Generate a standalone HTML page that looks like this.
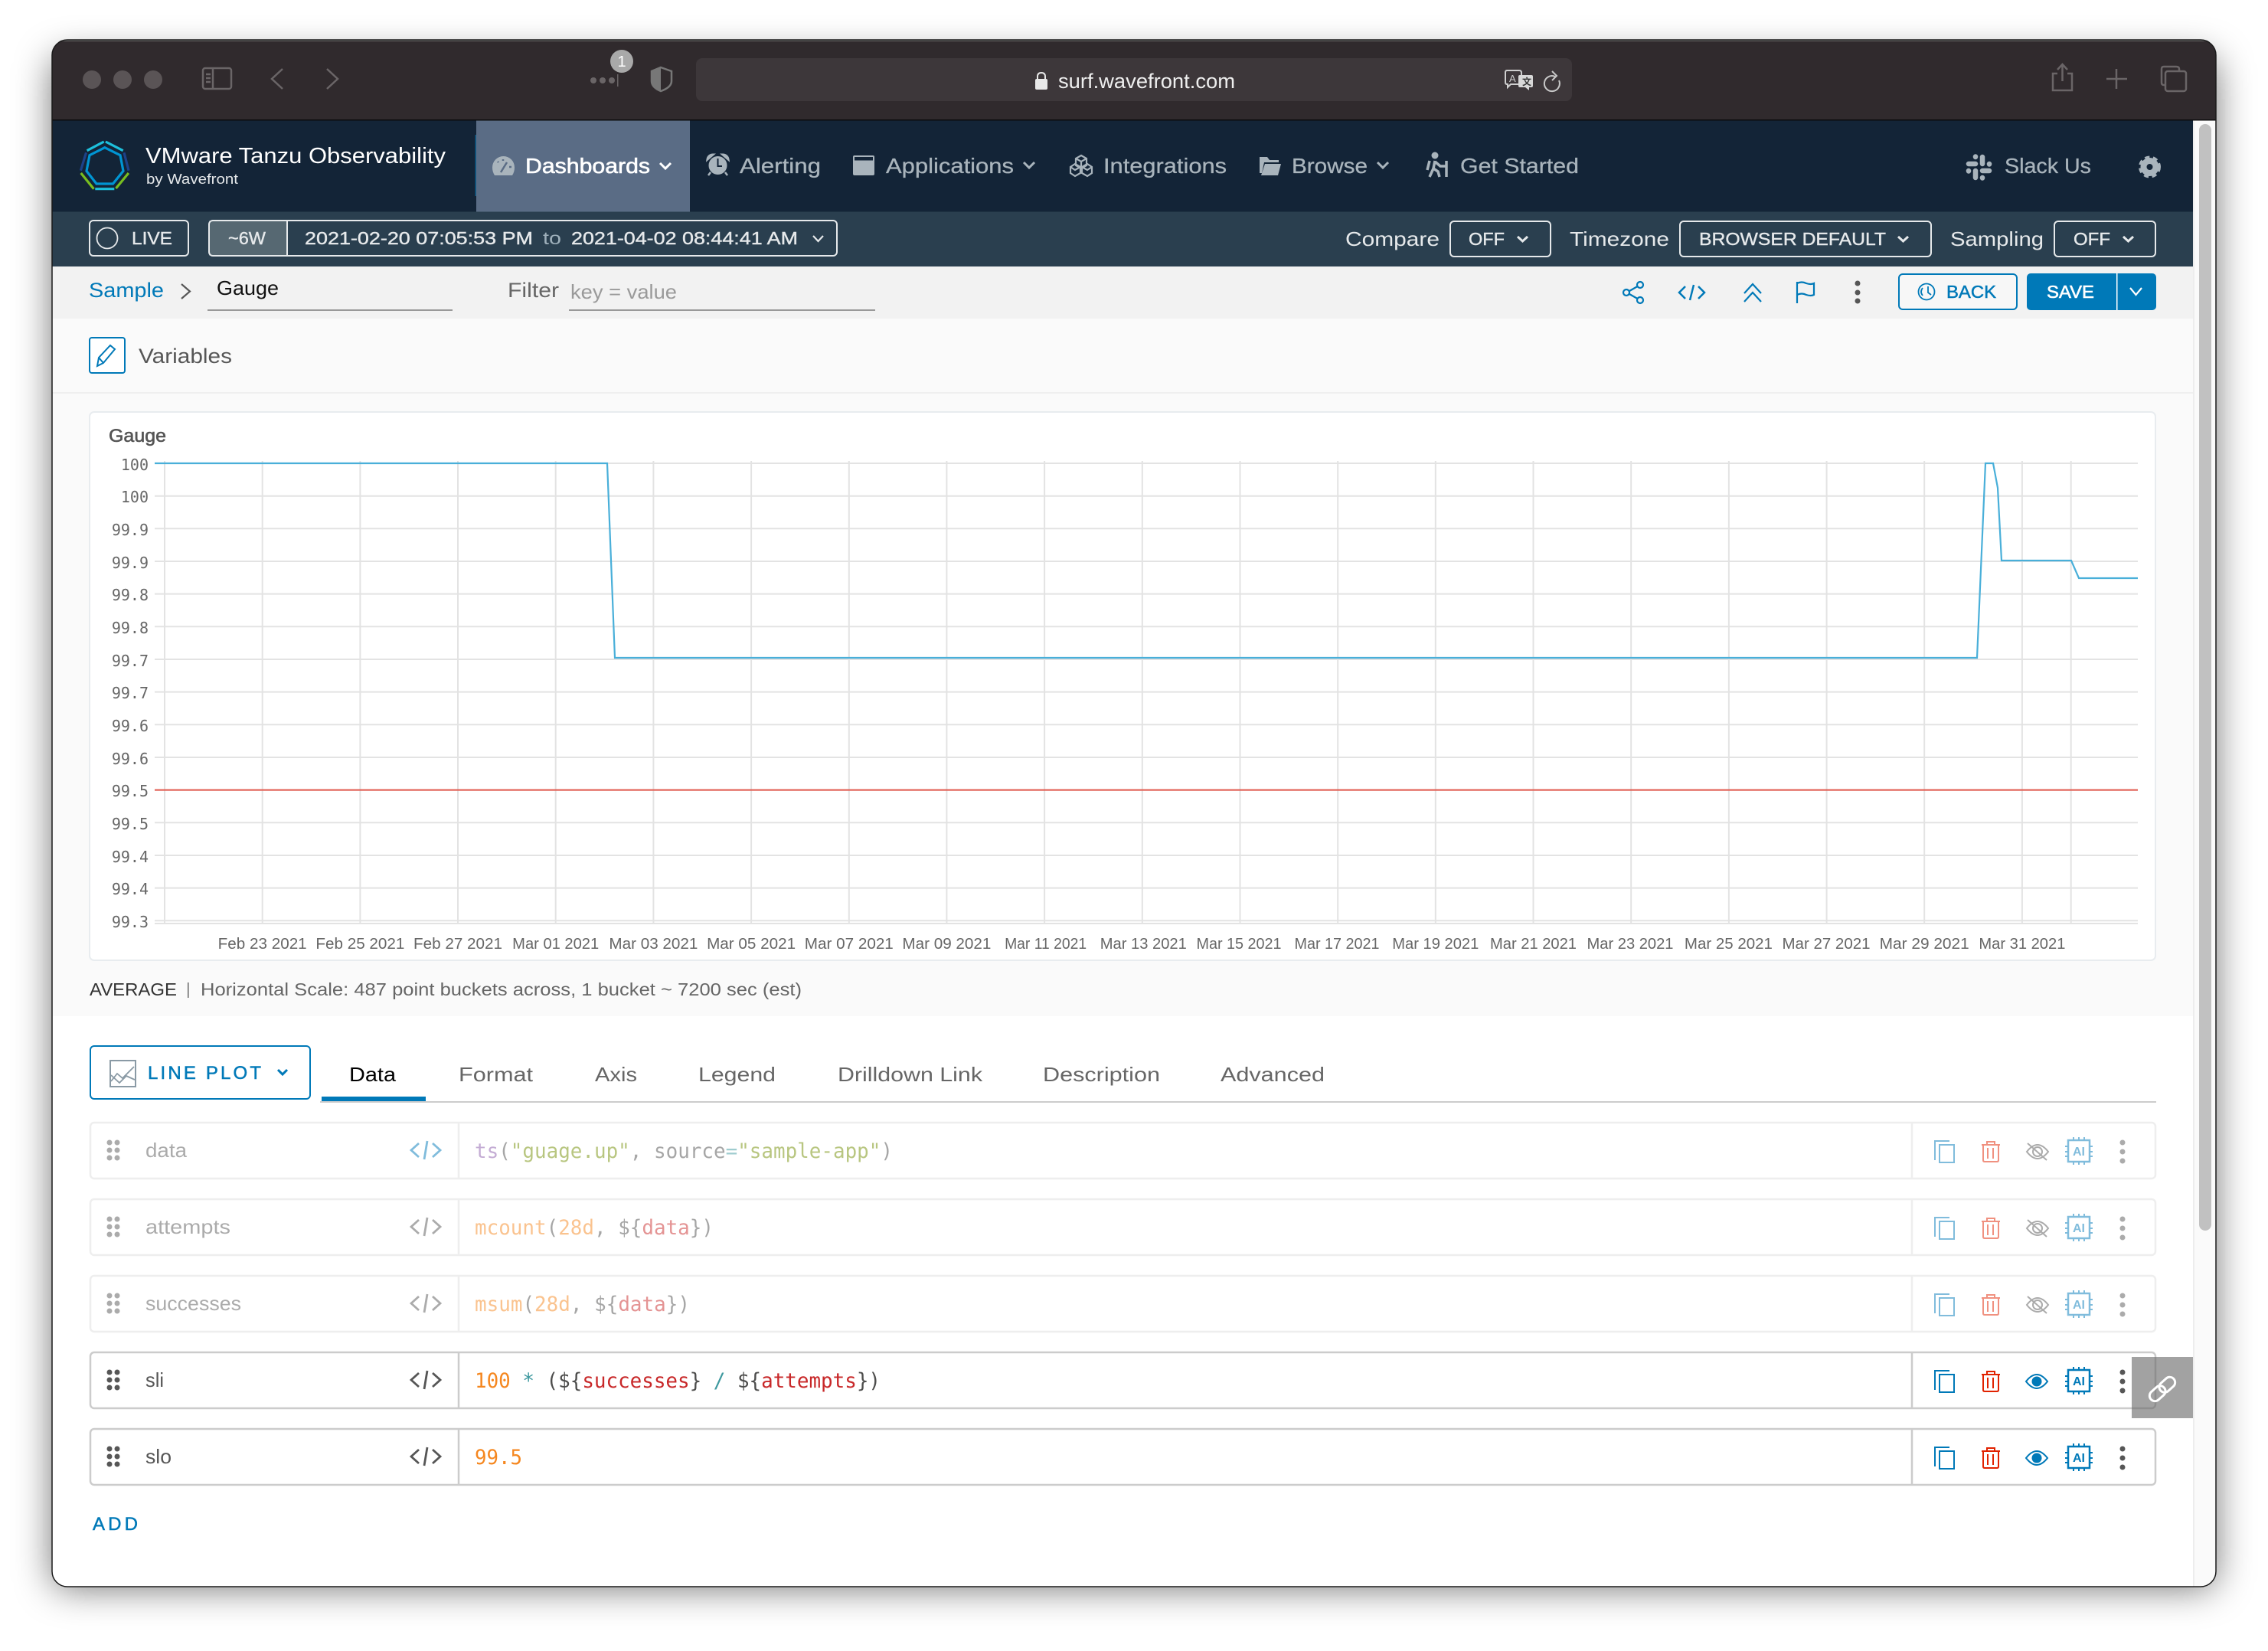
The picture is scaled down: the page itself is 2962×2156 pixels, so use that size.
<!DOCTYPE html>
<html lang="en">
<head>
<meta charset="utf-8">
<title>VMware Tanzu Observability - Gauge</title>
<style>
html,body{margin:0;padding:0;background:#fff;width:2962px;height:2156px;overflow:hidden}
svg{display:block}
text{font-family:"Liberation Sans",sans-serif;white-space:pre}
.m{font-family:"DejaVu Sans Mono","Liberation Mono",monospace}
.nav{font-size:28px;fill:#a9b4bc;stroke:#a9b4bc;stroke-width:.3px}
.bar{font-size:26px;fill:#e6e9eb}
.cap{font-size:23px;fill:#e6e9eb;stroke:#e6e9eb;stroke-width:.4px}
.xl{font-size:20px;fill:#666;text-anchor:middle}
.yl{font-size:20px;fill:#666;text-anchor:end}
.tab{font-size:26px;fill:#666}
.nm{font-size:26px;fill:#565656}
.code{font-size:27px;fill:#4d4d4c}
.wb{fill:none;stroke:#e6e9eb;stroke-width:2}
.ch{fill:none;stroke-width:3}
.grid line{stroke:#e3e3e3;stroke-width:2}
.tb{fill:none;stroke:#6a6567;stroke-width:2.5}
</style>
</head>
<body>
<svg xmlns="http://www.w3.org/2000/svg" width="2962" height="2156" viewBox="0 0 2962 2156">
<defs>
<filter id="sh" x="-10%" y="-10%" width="120%" height="120%"><feGaussianBlur stdDeviation="24"/></filter>
<clipPath id="win"><rect x="68" y="52" width="2826" height="2020" rx="20"/></clipPath>

<g id="rowicons">
  <path d="M2527 1815V1790H2546" fill="none" stroke="#0079b8" stroke-width="2"/>
  <rect x="2533" y="1795" width="19" height="23" fill="none" stroke="#0079b8" stroke-width="2"/>
  <path d="M2588 1795H2612M2595 1795V1791H2605V1795M2590 1795V1815Q2590 1817 2592 1817H2608Q2610 1817 2610 1815V1795M2596 1799V1813M2603 1799V1813" fill="none" stroke="#e12200" stroke-width="2"/>
  <g fill="none" stroke="#0079b8" stroke-width="2.5">
    <rect x="2701" y="1789" width="28" height="28" stroke-width="2.5"/>
    <path d="M2708 1785V1789M2715 1785V1789M2722 1785V1789M2708 1817V1821M2715 1817V1821M2722 1817V1821M2697 1797H2701M2697 1804H2701M2697 1810H2701M2729 1797H2733M2729 1804H2733M2729 1810H2733" stroke-width="2"/>
  </g>
  <circle cx="2772" cy="1792" r="3.5" fill="#565656"/><circle cx="2772" cy="1804" r="3.5" fill="#565656"/><circle cx="2772" cy="1816" r="3.5" fill="#565656"/>
</g>
<g id="eye">
  <path d="M2646 1804Q2660 1786 2674 1804Q2660 1822 2646 1804Z" fill="none" stroke="#0079b8" stroke-width="2"/>
  <circle cx="2660" cy="1804" r="6.5" fill="#0079b8"/>
</g>
<g id="eyeoff">
  <path d="M2647 1804Q2661 1786 2675 1804Q2661 1822 2647 1804Z" fill="none" stroke="#565656" stroke-width="2"/>
  <circle cx="2661" cy="1804" r="6" fill="none" stroke="#565656" stroke-width="2"/>
  <path d="M2648 1793L2673 1815" stroke="#565656" stroke-width="2" fill="none"/>
</g>
<g id="grip" fill="#565656">
  <circle cx="143" cy="1792" r="3.5"/><circle cx="153" cy="1792" r="3.5"/>
  <circle cx="143" cy="1802" r="3.5"/><circle cx="153" cy="1802" r="3.5"/>
  <circle cx="143" cy="1812" r="3.5"/><circle cx="153" cy="1812" r="3.5"/>
</g>
<path id="codeic" d="M547 1793L537 1802L547 1811M565 1793L575 1802L565 1811M558 1790L554 1814" fill="none" stroke-width="2.8"/>
</defs>

<rect width="2962" height="2156" fill="#fff"/>
<rect x="68" y="74" width="2826" height="2000" rx="20" fill="#000" fill-opacity=".55" filter="url(#sh)"/>

<g clip-path="url(#win)">
  <rect x="68" y="52" width="2826" height="2020" fill="#fff"/>
  <!-- browser toolbar -->
  <rect x="68" y="52" width="2826" height="104" fill="#302a2d"/>
  <rect x="68" y="52" width="2826" height="2" fill="#666"/>
  <rect x="68" y="156" width="2826" height="1.5" fill="#0c0c0c"/>
  <circle cx="120" cy="104" r="12" fill="#5a5456"/><circle cx="160" cy="104" r="12" fill="#5a5456"/><circle cx="200" cy="104" r="12" fill="#5a5456"/>
  <rect x="265" y="89" width="37" height="27" rx="3" class="tb"/>
  <path d="M278 89V116M269 97H275M269 102H275M269 107H275" class="tb" stroke-width="2"/>
  <path d="M369 90L355 103L369 116M427 90L441 103L427 116" class="tb"/>
  <circle cx="775" cy="105" r="4" fill="#6a6567"/><circle cx="787" cy="105" r="4" fill="#6a6567"/><circle cx="799" cy="105" r="4" fill="#6a6567"/>
  <rect x="806" y="97" width="1.5" height="16" fill="#6a6567"/>
  <circle cx="812" cy="80" r="15" fill="#a9a9a9"/>
  <text x="812" y="87" font-size="20" fill="#fff" text-anchor="middle">1</text>
  <path d="M863 88L877 93V106Q877 114 863 119Q851 114 851 106V93Z" fill="none" stroke="#777" stroke-width="2.5"/>
  <path d="M863 88L851 93V106Q851 114 863 119Z" fill="#777"/>
  <rect x="909" y="76" width="1144" height="56" rx="8" fill="#3d373a"/>
  <path d="M1355 104V100Q1355 95 1360 95Q1365 95 1365 100V104" fill="none" stroke="#e8e8e8" stroke-width="2"/>
  <rect x="1352" y="103" width="16" height="14" rx="2" fill="#e8e8e8"/>
  <text x="1382" y="115" font-size="27" fill="#eee" textLength="231" lengthAdjust="spacingAndGlyphs">surf.wavefront.com</text>
  <path d="M1968 92H1984Q1987 92 1987 95V107Q1987 110 1984 110H1973L1969 114V110H1968Q1966 110 1966 107V95Q1966 92 1968 92Z" fill="none" stroke="#cfcfcf" stroke-width="2"/>
  <path d="M1985 98H2000Q2002 98 2002 100V112Q2002 114 2000 114H1997V118L1992 114H1985Q1983 114 1983 112V100Q1983 98 1985 98Z" fill="#d8d8d8"/>
  <text x="1971" y="107" font-size="13" fill="#cfcfcf">A</text>
  <text x="1988" y="111" font-size="12" font-weight="bold" fill="#333" style="font-family:'Liberation Sans','Noto Sans CJK SC',sans-serif">文</text>
  <path d="M2031 100A10 10 0 1 0 2036 105" fill="none" stroke="#c8c8c8" stroke-width="2"/>
  <path d="M2027 93L2033 99L2027 105" fill="none" stroke="#c8c8c8" stroke-width="2"/>
  <path d="M2687 96H2681V118H2706V96H2700M2693.5 106V84M2687 91L2693.5 84L2700 91" class="tb"/>
  <path d="M2764 90V116M2751 103H2778" class="tb"/>
  <rect x="2828" y="93" width="27" height="26" rx="3" class="tb"/>
  <path d="M2828 111H2826Q2823 111 2823 108V90Q2823 87 2826 87H2842Q2846 87 2846 90V93" class="tb"/>

  <!-- nav bar -->
  <rect x="68" y="157.5" width="2796" height="119" fill="#132437"/>
  <rect x="622" y="157.5" width="279" height="119" fill="#5a6c85"/>
  <rect x="620.5" y="176" width="1.5" height="80" fill="#0f5d8a"/>
  <g fill="none" stroke-width="3.2">
    <path d="M136.8 192.7L157 202.7L161 223.3L147.5 240H126L113 223.3L117 202.7Z" stroke="#0095d3"/>
    <path d="M113.6 196.7L135.7 185M137.9 185L160.7 196.7M124.3 246.7H149.3" stroke="#1dc0dc"/>
    <path d="M112.5 199.3L105.4 222.7M162 199.3L168 222.7" stroke="#1d428a"/>
    <path d="M105.7 226L122.5 246.7M167.9 226L151.4 246" stroke="#78be20"/>
  </g>
  <text x="190" y="213" font-size="29" fill="#fff" textLength="392" lengthAdjust="spacingAndGlyphs">VMware Tanzu Observability</text>
  <text x="191" y="240" font-size="18" fill="#e6e9eb" textLength="120" lengthAdjust="spacingAndGlyphs">by Wavefront</text>

  <path d="M643 218.5a14.5 14.5 0 0 1 29 0q0 6-3 10.5h-23q-3-4.5-3-10.5z" fill="#a9b4bc"/>
  <path d="M654 225L662 212M650 211L651 212M657 208V210M665 218H668" stroke="#5a6c85" stroke-width="2.5" fill="none"/>
  <text x="686" y="226" font-size="28" fill="#fff" stroke="#fff" stroke-width=".6" textLength="163" lengthAdjust="spacingAndGlyphs">Dashboards</text>
  <path d="M862 213L869 220L876 213" class="ch" stroke="#fff"/>

  <circle cx="937.5" cy="216" r="12" fill="#a9b4bc"/>
  <path d="M924 208A7 7 0 0 1 931 202L924 208ZM951 208A7 7 0 0 0 944 202L951 208Z" fill="#a9b4bc" stroke="#a9b4bc" stroke-width="3"/>
  <path d="M937.5 207V217H943" stroke="#132437" stroke-width="2" fill="none"/>
  <path d="M928 225L925 229M947 225L950 229" stroke="#a9b4bc" stroke-width="2.5"/>
  <text x="966" y="226" class="nav" textLength="106" lengthAdjust="spacingAndGlyphs">Alerting</text>

  <rect x="1114" y="203" width="28" height="26" rx="2" fill="#a9b4bc"/>
  <rect x="1116" y="205" width="24" height="4.5" fill="#132437"/>
  <text x="1157" y="226" class="nav" textLength="167" lengthAdjust="spacingAndGlyphs">Applications</text>
  <path d="M1337 212L1344 219L1351 212" class="ch" stroke="#a9b4bc"/>

  <g fill="none" stroke="#a9b4bc" stroke-width="2.2">
    <path d="M1412 203L1419 207V216L1412 220L1405 216V207ZM1405 207L1412 211L1419 207M1412 211V220"/>
    <path d="M1404 214L1411 218V226L1404 230L1398 226V218ZM1398 218L1404 222L1411 218"/>
    <path d="M1420 214L1426 218V226L1420 230L1413 226V218ZM1413 218L1420 222L1426 218"/>
  </g>
  <text x="1441" y="226" class="nav" textLength="161" lengthAdjust="spacingAndGlyphs">Integrations</text>

  <path d="M1645 205H1655L1658 209H1670V212H1651L1648 226H1645Z" fill="#a9b4bc"/>
  <path d="M1652 214H1673L1669 229H1647Z" fill="#a9b4bc"/>
  <text x="1687" y="226" class="nav" textLength="99" lengthAdjust="spacingAndGlyphs">Browse</text>
  <path d="M1799 212L1806 219L1813 212" class="ch" stroke="#a9b4bc"/>

  <circle cx="1874" cy="203" r="4.5" fill="#a9b4bc"/>
  <path d="M1874 210L1872 220L1878 224L1880 231M1872 220L1867 231M1874 211L1881 217H1889M1889 210V231M1867 210L1864 222" fill="none" stroke="#a9b4bc" stroke-width="3.5"/>
  <text x="1907" y="226" class="nav" textLength="155" lengthAdjust="spacingAndGlyphs">Get Started</text>

  <g fill="none" stroke="#a9b4bc" stroke-width="6.5" stroke-linecap="round">
    <path d="M2571 214H2580M2589 205V214M2589 223H2598M2580 223V232"/>
    <path d="M2580 204.5V205M2598 214V214.5M2589 232V232.5M2571 223V223.5"/>
  </g>
  <text x="2618" y="226" class="nav" textLength="113" lengthAdjust="spacingAndGlyphs">Slack Us</text>
  <circle cx="2807.5" cy="218" r="8" fill="none" stroke="#a9b4bc" stroke-width="8"/>
  <circle cx="2807.5" cy="218" r="12.5" fill="none" stroke="#a9b4bc" stroke-width="4" stroke-dasharray="6 4.47"/>

  <!-- time bar -->
  <rect x="68" y="276.5" width="2796" height="71.5" fill="#2a3f4f"/>
  <rect x="117" y="288" width="129" height="46" rx="5" class="wb"/>
  <circle cx="140" cy="311" r="13.5" fill="none" stroke="#e6e9eb" stroke-width="1.8"/>
  <text x="172" y="319" class="cap" textLength="53" lengthAdjust="spacingAndGlyphs">LIVE</text>
  <rect x="273" y="288" width="101" height="46" fill="#566872"/>
  <rect x="273" y="288" width="820" height="46" rx="5" class="wb"/>
  <rect x="374" y="288" width="2" height="46" fill="#e6e9eb"/>
  <text x="298" y="319" class="cap" textLength="49" lengthAdjust="spacingAndGlyphs">~6W</text>
  <text x="398" y="319" class="cap" textLength="298" lengthAdjust="spacingAndGlyphs">2021-02-20 07:05:53 PM</text>
  <text x="709" y="319" font-size="23" fill="#9fb0bb" textLength="24" lengthAdjust="spacingAndGlyphs">to</text>
  <text x="746" y="319" class="cap" textLength="296" lengthAdjust="spacingAndGlyphs">2021-04-02 08:44:41 AM</text>
  <path d="M1062 308L1068.5 315L1075 308" fill="none" stroke="#e6e9eb" stroke-width="2.2"/>

  <text x="1757" y="321" class="bar" textLength="123" lengthAdjust="spacingAndGlyphs">Compare</text>
  <rect x="1894" y="289" width="131" height="46" rx="5" class="wb"/>
  <text x="1918" y="320" class="cap" textLength="47" lengthAdjust="spacingAndGlyphs">OFF</text>
  <path d="M1982 309L1988.5 315L1995 309" class="ch" stroke="#e6e9eb"/>
  <text x="2050" y="321" class="bar" textLength="130" lengthAdjust="spacingAndGlyphs">Timezone</text>
  <rect x="2194" y="289" width="328" height="46" rx="5" class="wb"/>
  <text x="2219" y="320" class="cap" textLength="244" lengthAdjust="spacingAndGlyphs">BROWSER DEFAULT</text>
  <path d="M2479 309L2485.5 315L2492 309" class="ch" stroke="#e6e9eb"/>
  <text x="2547" y="321" class="bar" textLength="122" lengthAdjust="spacingAndGlyphs">Sampling</text>
  <rect x="2683" y="289" width="132" height="46" rx="5" class="wb"/>
  <text x="2708" y="320" class="cap" textLength="48" lengthAdjust="spacingAndGlyphs">OFF</text>
  <path d="M2773 309L2779.5 315L2786 309" class="ch" stroke="#e6e9eb"/>

  <!-- breadcrumb bar -->
  <rect x="68" y="348" width="2796" height="68" fill="#f2f2f2"/>
  <rect x="68" y="416" width="2796" height="911" fill="#fafafa"/>
  <rect x="68" y="512" width="2796" height="2" fill="#efefef"/>
  <text x="116" y="388" font-size="27" fill="#0079b8" textLength="98" lengthAdjust="spacingAndGlyphs">Sample</text>
  <path d="M237 371L248 380.500L237 390" fill="none" stroke="#565656" stroke-width="2.2"/>
  <text x="283" y="385" font-size="26" fill="#111" textLength="81" lengthAdjust="spacingAndGlyphs">Gauge</text>
  <rect x="271" y="404" width="320" height="2" fill="#999"/>
  <text x="663" y="388" font-size="27" fill="#666" textLength="67" lengthAdjust="spacingAndGlyphs">Filter</text>
  <text x="745" y="390" font-size="26" fill="#9a9a9a" textLength="139" lengthAdjust="spacingAndGlyphs">key = value</text>
  <rect x="743" y="404" width="400" height="2" fill="#999"/>

  <g fill="none" stroke="#0079b8" stroke-width="2.2">
    <circle cx="2124" cy="382" r="4"/><circle cx="2142" cy="372" r="4"/><circle cx="2142" cy="392" r="4"/>
    <path d="M2128 380L2138.5 374M2128 384L2138.5 390"/>
    <path d="M2201 374L2193 382L2201 390M2218 374L2226 382L2218 390M2212 372L2207 392" stroke-width="2.5"/>
    <path d="M2278 383L2289 371L2300 383M2278 394L2289 382L2300 394"/>
    <path d="M2347 368V396M2347 370Q2353 367 2359 370Q2365 372 2369 370V385Q2365 387 2359 385Q2353 382 2347 385"/>
  </g>
  <circle cx="2426" cy="370" r="3.5" fill="#565656"/><circle cx="2426" cy="382" r="3.5" fill="#565656"/><circle cx="2426" cy="393" r="3.5" fill="#565656"/>
  <rect x="2480" y="358" width="154" height="46" rx="5" fill="#f7f7f7" stroke="#0079b8" stroke-width="2"/>
  <circle cx="2516" cy="381" r="10.5" fill="none" stroke="#0079b8" stroke-width="1.8"/>
  <path d="M2518 374V382L2522 385M2511 376Q2507 381 2511 386" fill="none" stroke="#0079b8" stroke-width="1.8"/>
  <text x="2542" y="389" font-size="23" fill="#0079b8" stroke="#0079b8" stroke-width=".5" textLength="65" lengthAdjust="spacingAndGlyphs">BACK</text>
  <rect x="2647" y="357" width="169" height="48" rx="5" fill="#0079b8"/>
  <rect x="2764" y="357" width="1.5" height="48" fill="#fff"/>
  <text x="2673" y="389" font-size="23" fill="#fff" stroke="#fff" stroke-width=".6" textLength="62" lengthAdjust="spacingAndGlyphs">SAVE</text>
  <path d="M2782 376L2789.5 385L2797 376" fill="none" stroke="#fff" stroke-width="2.2"/>

  <!-- variables -->
  <rect x="117" y="441" width="46" height="46" rx="3" fill="#fff" stroke="#0079b8" stroke-width="2"/>
  <path d="M127 478L129 467L144 451L150 456L135 474ZM129 467L135 474" fill="none" stroke="#0079b8" stroke-width="2"/>
  <text x="181" y="474" font-size="27" fill="#565656" textLength="122" lengthAdjust="spacingAndGlyphs">Variables</text>

  <!-- chart card -->
  <rect x="117" y="538" width="2698" height="716" rx="6" fill="#fff" stroke="#e8ecef" stroke-width="2"/>
  <text x="142" y="577" font-size="24" fill="#555" stroke="#555" stroke-width=".6" textLength="75" lengthAdjust="spacingAndGlyphs">Gauge</text>
  <g class="grid">
    <line x1="202" x2="2792" y1="605" y2="605"/><line x1="202" x2="2792" y1="647.7" y2="647.7"/>
    <line x1="202" x2="2792" y1="690.3" y2="690.3"/><line x1="202" x2="2792" y1="733" y2="733"/>
    <line x1="202" x2="2792" y1="775.6" y2="775.6"/><line x1="202" x2="2792" y1="818.3" y2="818.3"/>
    <line x1="202" x2="2792" y1="861" y2="861"/><line x1="202" x2="2792" y1="903.6" y2="903.6"/>
    <line x1="202" x2="2792" y1="946.3" y2="946.3"/><line x1="202" x2="2792" y1="989" y2="989"/>
    <line x1="202" x2="2792" y1="1031.6" y2="1031.6"/><line x1="202" x2="2792" y1="1074.3" y2="1074.3"/>
    <line x1="202" x2="2792" y1="1117" y2="1117"/><line x1="202" x2="2792" y1="1159.6" y2="1159.6"/>
    <line x1="202" x2="2792" y1="1202.3" y2="1202.3"/><line x1="202" x2="2792" y1="1206" y2="1206"/>
    <line x1="215" x2="215" y1="602" y2="1206"/><line x1="342.7" x2="342.7" y1="602" y2="1206"/>
    <line x1="470.4" x2="470.4" y1="602" y2="1206"/><line x1="598" x2="598" y1="602" y2="1206"/>
    <line x1="725.7" x2="725.7" y1="602" y2="1206"/><line x1="853.4" x2="853.4" y1="602" y2="1206"/>
    <line x1="981.1" x2="981.1" y1="602" y2="1206"/><line x1="1108.8" x2="1108.8" y1="602" y2="1206"/>
    <line x1="1236.4" x2="1236.4" y1="602" y2="1206"/><line x1="1364.1" x2="1364.1" y1="602" y2="1206"/>
    <line x1="1491.8" x2="1491.8" y1="602" y2="1206"/><line x1="1619.5" x2="1619.5" y1="602" y2="1206"/>
    <line x1="1747.2" x2="1747.2" y1="602" y2="1206"/><line x1="1874.8" x2="1874.8" y1="602" y2="1206"/>
    <line x1="2002.5" x2="2002.5" y1="602" y2="1206"/><line x1="2130.2" x2="2130.2" y1="602" y2="1206"/>
    <line x1="2257.9" x2="2257.9" y1="602" y2="1206"/><line x1="2385.6" x2="2385.6" y1="602" y2="1206"/>
    <line x1="2513.2" x2="2513.2" y1="602" y2="1206"/><line x1="2640.9" x2="2640.9" y1="602" y2="1206"/>
    <line x1="2704.7" x2="2704.7" y1="602" y2="1206"/>
  </g>
  <path d="M202 1031.6H2792" fill="none" stroke="#e2574c" stroke-width="2"/>
  <path d="M202 605H793L803 859H2582L2593 605H2603L2609 637L2614 732H2705L2715 755H2792" fill="none" stroke="#49afd9" stroke-width="2.2"/>
  <g>
    <text class="m yl" x="194" y="614">100</text><text class="m yl" x="194" y="656">100</text>
    <text class="m yl" x="194" y="699">99.9</text><text class="m yl" x="194" y="742">99.9</text>
    <text class="m yl" x="194" y="784">99.8</text><text class="m yl" x="194" y="827">99.8</text>
    <text class="m yl" x="194" y="870">99.7</text><text class="m yl" x="194" y="912">99.7</text>
    <text class="m yl" x="194" y="955">99.6</text><text class="m yl" x="194" y="998">99.6</text>
    <text class="m yl" x="194" y="1040">99.5</text><text class="m yl" x="194" y="1083">99.5</text>
    <text class="m yl" x="194" y="1126">99.4</text><text class="m yl" x="194" y="1168">99.4</text>
    <text class="m yl" x="194" y="1211">99.3</text>
  </g>
  <text class="xl" x="342.7" y="1239" textLength="116" lengthAdjust="spacingAndGlyphs">Feb 23 2021</text>
  <text class="xl" x="470.4" y="1239" textLength="116" lengthAdjust="spacingAndGlyphs">Feb 25 2021</text>
  <text class="xl" x="598" y="1239" textLength="116" lengthAdjust="spacingAndGlyphs">Feb 27 2021</text>
  <text class="xl" x="725.7" y="1239" textLength="113" lengthAdjust="spacingAndGlyphs">Mar 01 2021</text>
  <text class="xl" x="853.4" y="1239" textLength="116" lengthAdjust="spacingAndGlyphs">Mar 03 2021</text>
  <text class="xl" x="981.1" y="1239" textLength="116" lengthAdjust="spacingAndGlyphs">Mar 05 2021</text>
  <text class="xl" x="1108.8" y="1239" textLength="116" lengthAdjust="spacingAndGlyphs">Mar 07 2021</text>
  <text class="xl" x="1236.4" y="1239" textLength="116" lengthAdjust="spacingAndGlyphs">Mar 09 2021</text>
  <text class="xl" x="1365.6" y="1239" textLength="107" lengthAdjust="spacingAndGlyphs">Mar 11 2021</text>
  <text class="xl" x="1493.3" y="1239" textLength="113" lengthAdjust="spacingAndGlyphs">Mar 13 2021</text>
  <text class="xl" x="1618" y="1239" textLength="111" lengthAdjust="spacingAndGlyphs">Mar 15 2021</text>
  <text class="xl" x="1746" y="1239" textLength="111" lengthAdjust="spacingAndGlyphs">Mar 17 2021</text>
  <text class="xl" x="1874.8" y="1239" textLength="113" lengthAdjust="spacingAndGlyphs">Mar 19 2021</text>
  <text class="xl" x="2002.5" y="1239" textLength="113" lengthAdjust="spacingAndGlyphs">Mar 21 2021</text>
  <text class="xl" x="2129" y="1239" textLength="113" lengthAdjust="spacingAndGlyphs">Mar 23 2021</text>
  <text class="xl" x="2257.4" y="1239" textLength="115" lengthAdjust="spacingAndGlyphs">Mar 25 2021</text>
  <text class="xl" x="2385" y="1239" textLength="115" lengthAdjust="spacingAndGlyphs">Mar 27 2021</text>
  <text class="xl" x="2513.2" y="1239" textLength="117" lengthAdjust="spacingAndGlyphs">Mar 29 2021</text>
  <text class="xl" x="2640.9" y="1239" textLength="113" lengthAdjust="spacingAndGlyphs">Mar 31 2021</text>

  <text x="117" y="1300" font-size="23" fill="#333" textLength="114" lengthAdjust="spacingAndGlyphs">AVERAGE</text>
  <rect x="245" y="1283" width="1.5" height="20" fill="#666"/>
  <text x="262" y="1300" font-size="23" fill="#666" textLength="785" lengthAdjust="spacingAndGlyphs">Horizontal Scale: 487 point buckets across, 1 bucket ~ 7200 sec (est)</text>

  <!-- tabs -->
  <rect x="118" y="1366" width="287" height="69" rx="5" fill="#fff" stroke="#0079b8" stroke-width="2"/>
  <rect x="144" y="1385" width="33" height="34" fill="none" stroke="#8a9aa5" stroke-width="2"/>
  <path d="M145 1412L153 1402L160 1408L175 1393M145 1404L156 1414L165 1405L176 1410" fill="none" stroke="#8a9aa5" stroke-width="1.8"/>
  <text x="193" y="1409" font-size="24" fill="#0079b8" stroke="#0079b8" stroke-width=".5" textLength="148" lengthAdjust="spacing">LINE PLOT</text>
  <path d="M363 1397L369 1403L375 1397" class="ch" stroke="#0079b8"/>
  <text x="456" y="1412" class="tab" style="fill:#000" textLength="61" lengthAdjust="spacingAndGlyphs">Data</text>
  <text x="599" y="1412" class="tab" textLength="97" lengthAdjust="spacingAndGlyphs">Format</text>
  <text x="777" y="1412" class="tab" textLength="55" lengthAdjust="spacingAndGlyphs">Axis</text>
  <text x="912" y="1412" class="tab" textLength="101" lengthAdjust="spacingAndGlyphs">Legend</text>
  <text x="1094" y="1412" class="tab" textLength="189" lengthAdjust="spacingAndGlyphs">Drilldown Link</text>
  <text x="1362" y="1412" class="tab" textLength="153" lengthAdjust="spacingAndGlyphs">Description</text>
  <text x="1594" y="1412" class="tab" textLength="136" lengthAdjust="spacingAndGlyphs">Advanced</text>
  <rect x="418" y="1438" width="2398" height="2" fill="#ccc"/>
  <rect x="420" y="1432" width="136" height="6" fill="#0079b8"/>

  <!-- row 1 -->
  <g>
    <rect x="118" y="1466" width="2697" height="73" rx="5" fill="#fff" stroke="#eee" stroke-width="2.5"/>
    <path d="M599 1465V1539M2497 1465V1539" stroke="#eee" stroke-width="2.5"/>
    <g opacity=".5">
      <use href="#grip" y="-300"/>
      <text x="190" y="1511" class="nm" textLength="54" lengthAdjust="spacingAndGlyphs">data</text>
      <use href="#codeic" y="-300" stroke="#0079b8"/>
      <text x="620" y="1512" class="m code" textLength="546" lengthAdjust="spacingAndGlyphs"><tspan fill="#8959a8" style="fill:#8959a8">ts</tspan>(<tspan style="fill:#718c00">"guage.up"</tspan>, source<tspan style="fill:#3e999f">=</tspan><tspan style="fill:#718c00">"sample-app"</tspan>)</text>
      <use href="#rowicons" y="-300"/>
      <use href="#eyeoff" y="-300"/>
      <text x="2715" y="1509" font-size="16" font-weight="bold" fill="#0079b8" text-anchor="middle" textLength="16" lengthAdjust="spacingAndGlyphs">AI</text>
    </g>
  </g>
  <!-- row 2 -->
  <g>
    <rect x="118" y="1566" width="2697" height="73" rx="5" fill="#fff" stroke="#eee" stroke-width="2.5"/>
    <path d="M599 1565V1639M2497 1565V1639" stroke="#eee" stroke-width="2.5"/>
    <g opacity=".5">
      <use href="#grip" y="-200"/>
      <text x="190" y="1611" class="nm" textLength="111" lengthAdjust="spacingAndGlyphs">attempts</text>
      <use href="#codeic" y="-200" stroke="#565656"/>
      <text x="620" y="1612" class="m code" textLength="312" lengthAdjust="spacingAndGlyphs"><tspan style="fill:#f5871f">mcount</tspan>(<tspan style="fill:#f5871f">28d</tspan>, ${<tspan style="fill:#c82829">data</tspan>})</text>
      <use href="#rowicons" y="-200"/>
      <use href="#eyeoff" y="-200"/>
      <text x="2715" y="1609" font-size="16" font-weight="bold" fill="#0079b8" text-anchor="middle" textLength="16" lengthAdjust="spacingAndGlyphs">AI</text>
    </g>
  </g>
  <!-- row 3 -->
  <g>
    <rect x="118" y="1666" width="2697" height="73" rx="5" fill="#fff" stroke="#eee" stroke-width="2.5"/>
    <path d="M599 1665V1739M2497 1665V1739" stroke="#eee" stroke-width="2.5"/>
    <g opacity=".5">
      <use href="#grip" y="-100"/>
      <text x="190" y="1711" class="nm" textLength="125" lengthAdjust="spacingAndGlyphs">successes</text>
      <use href="#codeic" y="-100" stroke="#565656"/>
      <text x="620" y="1712" class="m code" textLength="281" lengthAdjust="spacingAndGlyphs"><tspan style="fill:#f5871f">msum</tspan>(<tspan style="fill:#f5871f">28d</tspan>, ${<tspan style="fill:#c82829">data</tspan>})</text>
      <use href="#rowicons" y="-100"/>
      <use href="#eyeoff" y="-100"/>
      <text x="2715" y="1709" font-size="16" font-weight="bold" fill="#0079b8" text-anchor="middle" textLength="16" lengthAdjust="spacingAndGlyphs">AI</text>
    </g>
  </g>
  <!-- row 4 -->
  <g>
    <rect x="118" y="1766" width="2697" height="73" rx="5" fill="#fff" stroke="#ccc" stroke-width="2.5"/>
    <path d="M599 1765V1839M2497 1765V1839" stroke="#ccc" stroke-width="2.5"/>
    <use href="#grip"/>
    <text x="190" y="1811" class="nm" textLength="24" lengthAdjust="spacingAndGlyphs">sli</text>
    <use href="#codeic" stroke="#565656"/>
    <text x="620" y="1812" class="m code" textLength="530" lengthAdjust="spacingAndGlyphs"><tspan style="fill:#f5871f">100</tspan> <tspan style="fill:#3e999f">*</tspan> (${<tspan style="fill:#c82829">successes</tspan>} <tspan style="fill:#3e999f">/</tspan> ${<tspan style="fill:#c82829">attempts</tspan>})</text>
    <use href="#rowicons"/>
    <use href="#eye"/>
    <text x="2715" y="1809" font-size="16" font-weight="bold" fill="#0079b8" text-anchor="middle" textLength="16" lengthAdjust="spacingAndGlyphs">AI</text>
  </g>
  <!-- row 5 -->
  <g>
    <rect x="118" y="1866" width="2697" height="73" rx="5" fill="#fff" stroke="#ccc" stroke-width="2.5"/>
    <path d="M599 1865V1939M2497 1865V1939" stroke="#ccc" stroke-width="2.5"/>
    <use href="#grip" y="100"/>
    <text x="190" y="1911" class="nm" textLength="34" lengthAdjust="spacingAndGlyphs">slo</text>
    <use href="#codeic" y="100" stroke="#565656"/>
    <text x="620" y="1912" class="m code" style="fill:#f5871f" textLength="62" lengthAdjust="spacingAndGlyphs">99.5</text>
    <use href="#rowicons" y="100"/>
    <use href="#eye" y="100"/>
    <text x="2715" y="1909" font-size="16" font-weight="bold" fill="#0079b8" text-anchor="middle" textLength="16" lengthAdjust="spacingAndGlyphs">AI</text>
  </g>

  <text x="121" y="1998" font-size="24" fill="#0079b8" stroke="#0079b8" stroke-width=".5" textLength="59" lengthAdjust="spacing">ADD</text>

  <!-- link overlay -->
  <rect x="2784" y="1772" width="80" height="80" fill="#646464" fill-opacity=".6"/>
  <g transform="translate(2824 1814) rotate(-42)" fill="none" stroke="#fff" stroke-width="3">
    <rect x="-20" y="-7" width="23" height="14" rx="7"/>
    <rect x="-3" y="-7" width="23" height="14" rx="7"/>
  </g>

  <!-- scrollbar -->
  <rect x="2864" y="157.5" width="30" height="1915" fill="#fafafa"/>
  <rect x="2864" y="157.5" width="2" height="1915" fill="#ededed"/>
  <rect x="2872" y="162" width="16" height="1445" rx="8" fill="#c1c1c1"/>
</g>
<rect x="68" y="52" width="2826" height="2020" rx="20" fill="none" stroke="#1a1a1a" stroke-width="1.5"/>
</svg>
</body>
</html>
